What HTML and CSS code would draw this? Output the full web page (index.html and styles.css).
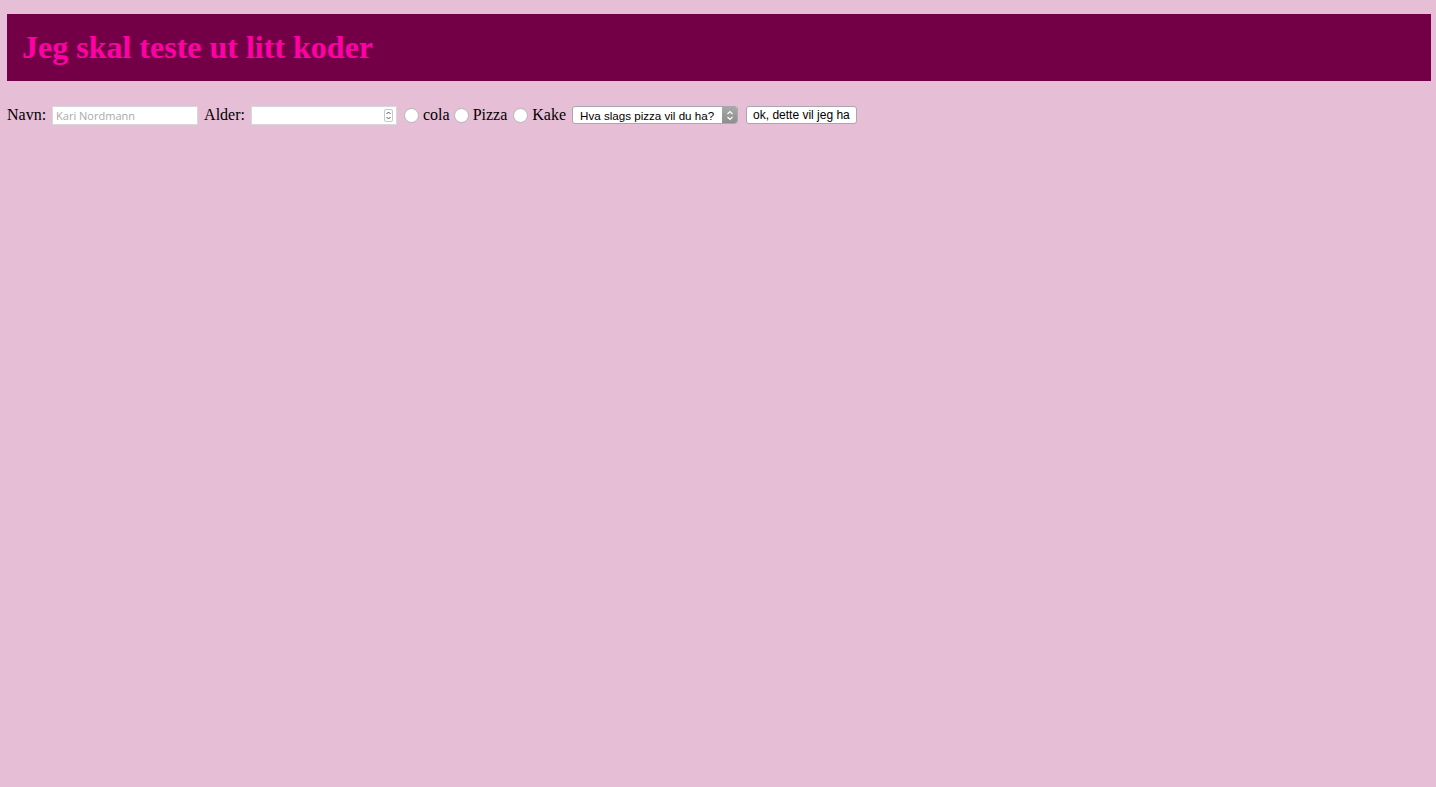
FILE: index.html
```html
<!DOCTYPE html>
<html lang="no">
<head>
<meta charset="utf-8">
<title>Koder</title>
<link rel="stylesheet" href="styles.css">
</head>
<body>
<header class="banner">
  <h1 class="title">Jeg skal teste ut litt koder</h1>
</header>
<form class="order">
  <label class="lbl">Navn:</label>
  <input class="field" type="text" placeholder="Kari Nordmann">
  <label class="lbl">Alder:</label>
  <span class="field num"><span class="spin"><svg width="7" height="11" viewBox="0 0 7 11"><path d="M1.5 4 L3.5 2 L5.5 4 M1.5 7 L3.5 9 L5.5 7" fill="none" stroke="#555" stroke-width="1"/></svg></span></span>
  <span class="radio"></span><span class="lbl">cola</span>
  <span class="radio"></span><span class="lbl">Pizza</span>
  <span class="radio wide"></span><span class="lbl">Kake</span>
  <span class="select"><span class="sel-text">Hva slags pizza vil du ha?</span><span class="sel-arrow"><svg width="8" height="11" viewBox="0 0 8 11"><path d="M1.5 4 L4 1.5 L6.5 4 M1.5 7 L4 9.5 L6.5 7" fill="none" stroke="#fff" stroke-width="1.2"/></svg></span></span>
  <span class="btn">ok, dette vil jeg ha</span>
</form>
</body>
</html>
```

FILE: styles.css
```css
html, body {
  margin: 0;
  padding: 0;
}
body {
  background: #e6bed6;
  font-family: "Liberation Serif", "Times New Roman", serif;
  font-size: 16px;
  color: #000;
  padding: 14px 5px 0 7px;
}
.banner {
  background: #730046;
  height: 67px;
  display: flex;
  align-items: center;
  padding-left: 15px;
}
.title {
  margin: 0;
  color: #ff00a6;
  font-size: 32px;
  font-weight: bold;
  line-height: 1;
  padding-bottom: 2px;
}
.order {
  display: flex;
  align-items: center;
  margin-top: 24px;
  height: 20px;
}
.lbl {
  line-height: 20px;
}
.field {
  box-sizing: border-box;
  width: 146px;
  height: 19px;
  border: 1px solid #d8d8d8;
  background: #fff;
  font-family: "Open Sans", "Liberation Sans", sans-serif;
  font-size: 11px;
  padding: 0 3px;
  margin: 0 6px 0 6px;
  outline: none;
}
.field::placeholder {
  color: #a9a9a9;
}
.num {
  display: flex;
  align-items: center;
  justify-content: flex-end;
  padding-right: 3px;
  margin: 0 7px 0 6px;
}
.spin {
  display: flex;
  width: 7px;
  height: 11px;
  border: 1px solid #c8c8c8;
  border-radius: 2px;
  align-items: center;
  justify-content: center;
}
.radio {
  box-sizing: border-box;
  width: 15px;
  height: 15px;
  border-radius: 50%;
  border: 1px solid #b5b5b5;
  background: #fff;
  margin: 0 4px 0 0;
}
.lbl + .radio {
  margin-left: 4px;
}
.lbl + .radio.wide {
  margin-left: 6px;
}
.select {
  box-sizing: border-box;
  display: flex;
  align-items: center;
  width: 166px;
  height: 18px;
  margin-left: 6px;
  border: 1px solid #a8a8a8;
  border-radius: 3px;
  background: #fff;
  overflow: hidden;
  font-family: "Liberation Sans", Arial, sans-serif;
  font-size: 11.6px;
}
.sel-text {
  flex: 1;
  padding-left: 7px;
}
.sel-arrow {
  width: 15px;
  height: 100%;
  background: linear-gradient(#a8a8a8, #8e8e8e);
  display: flex;
  align-items: center;
  justify-content: center;
}
.btn {
  box-sizing: border-box;
  display: flex;
  align-items: center;
  height: 18px;
  margin-left: 8px;
  padding: 0 6px;
  border: 1px solid #a8a8a8;
  border-radius: 3px;
  background: #fff;
  font-family: "Liberation Sans", Arial, sans-serif;
  font-size: 12px;
}
```
